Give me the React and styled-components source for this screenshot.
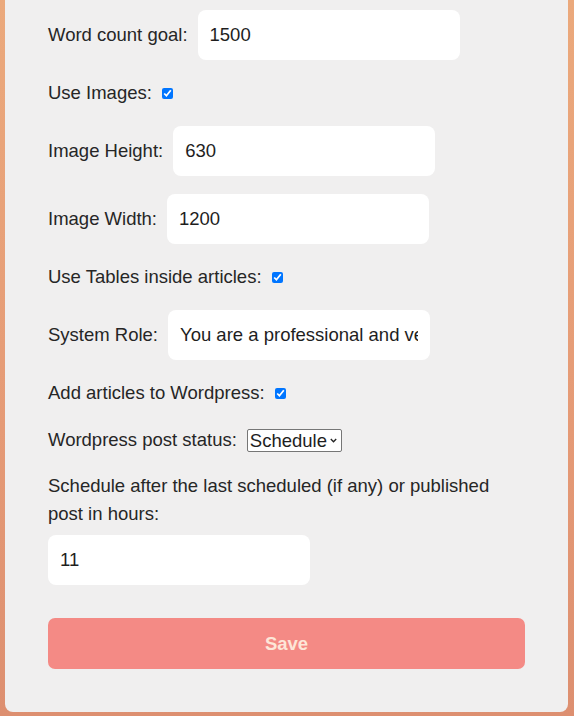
import React from "react";
import styled, { createGlobalStyle } from "styled-components";

const GlobalStyle = createGlobalStyle`
  body {
    margin: 0;
    font-family: "Liberation Sans", Arial, sans-serif;
  }
`;

const Page = styled.div`
  min-height: 100vh;
  background: linear-gradient(180deg, #eba97c 0%, #e59a76 60%, #dd8f70 100%);
  padding: 0 6px 0 5px;
  box-sizing: border-box;
`;

const Card = styled.form`
  background: #f0efef;
  border-radius: 0 0 8px 8px;
  padding: 10px 43px 43px;
  display: flex;
  flex-direction: column;
  gap: 18px;
  color: #262626;
  font-size: 18.5px;
`;

const Row = styled.div`
  display: flex;
  align-items: center;
  min-height: ${(p) => p.$h || 30}px;
`;

const Label = styled.label`
  line-height: 28px;
`;

const TextInput = styled.input`
  width: 262px;
  height: 50px;
  box-sizing: border-box;
  margin-left: ${(p) => (p.$block ? 0 : 10)}px;
  margin-top: ${(p) => (p.$block ? 7 : 0)}px;
  padding: 0 12px;
  border: none;
  border-radius: 8px;
  background: #fff;
  font: inherit;
  color: #1e1e1e;
  outline: none;
`;

const Check = styled.input.attrs({ type: "checkbox" })`
  width: 11px;
  height: 11px;
  margin: 0 0 0 10px;
`;

const SelectBox = styled.span`
  margin-left: 10px;
  display: inline-flex;
  align-items: center;
  height: 23px;
  box-sizing: border-box;
  border: 1px solid #767676;
  border-radius: 2px;
  background: #fff;
  padding: 0 4px 0 2px;
  gap: 2px;
`;

const Select = styled.select`
  appearance: none;
  border: none;
  background: transparent;
  padding: 0;
  margin: 0;
  font: inherit;
  color: #1e1e1e;
  outline: none;
`;

const Block = styled.div`
  display: flex;
  flex-direction: column;
  align-items: flex-start;
`;

const SaveButton = styled.button`
  margin-top: 15px;
  height: 51px;
  border: none;
  border-radius: 7px;
  background: #f48a85;
  color: #fde6d8;
  font: inherit;
  font-weight: bold;
  cursor: pointer;
`;

export default function App() {
  return (
    <>
      <GlobalStyle />
      <Page>
        <Card onSubmit={(e) => e.preventDefault()}>
          <Row $h={50}>
            <Label>Word count goal:</Label>
            <TextInput defaultValue="1500" />
          </Row>
          <Row>
            <Label>Use Images:</Label>
            <Check defaultChecked />
          </Row>
          <Row $h={50}>
            <Label>Image Height:</Label>
            <TextInput defaultValue="630" />
          </Row>
          <Row $h={50}>
            <Label>Image Width:</Label>
            <TextInput defaultValue="1200" />
          </Row>
          <Row>
            <Label>Use Tables inside articles:</Label>
            <Check defaultChecked />
          </Row>
          <Row $h={50}>
            <Label>System Role:</Label>
            <TextInput defaultValue="You are a professional and very experienced writer" />
          </Row>
          <Row>
            <Label>Add articles to Wordpress:</Label>
            <Check defaultChecked />
          </Row>
          <Row $h={28}>
            <Label>Wordpress post status:</Label>
            <SelectBox>
              <Select defaultValue="future">
                <option value="publish">Publish</option>
                <option value="draft">Draft</option>
                <option value="future">Schedule</option>
              </Select>
              <svg width="7" height="5" viewBox="0 0 7 5">
                <path d="M0.8 1 L3.5 3.8 L6.2 1" fill="none" stroke="#222" strokeWidth="1.3" />
              </svg>
            </SelectBox>
          </Row>
          <Block>
            <Label>
              Schedule after the last scheduled (if any) or published post in
              hours:
            </Label>
            <TextInput $block defaultValue="11" />
          </Block>
          <SaveButton type="submit">Save</SaveButton>
        </Card>
      </Page>
    </>
  );
}
